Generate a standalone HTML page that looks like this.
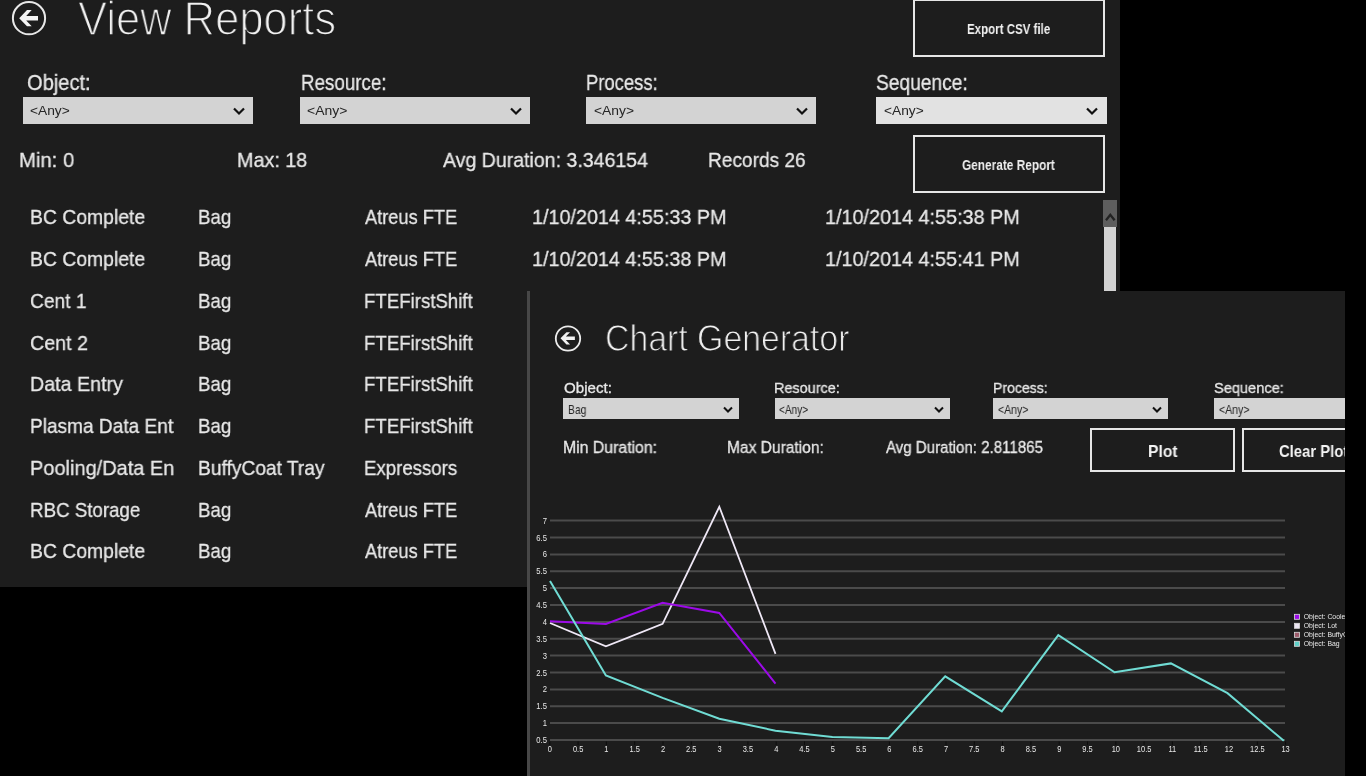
<!DOCTYPE html>
<html><head><meta charset="utf-8">
<style>
html,body{margin:0;padding:0;}
body{width:1366px;height:776px;background:#000;position:relative;overflow:hidden;font-family:"Liberation Sans",sans-serif;}
.abs{position:absolute;}
.t{will-change:transform;position:absolute;white-space:pre;transform-origin:0 0;font-family:"Liberation Sans",sans-serif;}
.t[style*="font-weight:400;color:#e8e8e8"]{-webkit-text-stroke:0.3px #e8e8e8;}
#main{position:absolute;left:0;top:0;width:1120px;height:587px;background:#1d1d1d;overflow:hidden;}
#clip{position:absolute;left:0;top:0;width:1345px;height:776px;overflow:hidden;}
#chart{position:absolute;left:527px;top:291px;width:818px;height:485px;background:#1d1d1d;}
#chartline{position:absolute;left:527px;top:291px;width:3px;height:485px;background:#474747;}
.dd{position:absolute;background:#d3d3d3;}
.btn{position:absolute;box-sizing:border-box;border:2.5px solid #e6e6e6;}
</style></head><body>
<div id="main">
<svg class="abs" style="left:0;top:0" width="60" height="40" viewBox="0 0 60 40">
 <circle cx="29" cy="18.2" r="16.1" fill="none" stroke="#e8e8e8" stroke-width="2"/>
 <path d="M19.2,18.15 L27,10.1 L31.7,10.1 L26.2,15.9 L38,15.9 L38,20.4 L26.2,20.4 L31.7,26.2 L27,26.2 Z" fill="#f4f4f4"/>
</svg>
<div class="dd" style="left:23px;top:97px;width:230px;height:27px"></div>
<div class="dd" style="left:300px;top:97px;width:230px;height:27px"></div>
<div class="dd" style="left:586px;top:97px;width:230px;height:27px"></div>
<div class="dd" style="left:876px;top:97px;width:231px;height:27px;background:#e2e2e2"></div>
<svg class="abs" style="left:0;top:0" width="1120" height="130" viewBox="0 0 1120 130">
 <g fill="none" stroke="#111" stroke-width="2.2">
  <polyline points="234,108.5 239,113.5 244,108.5"/>
  <polyline points="511,108.5 516,113.5 521,108.5"/>
  <polyline points="797,108.5 802,113.5 807,108.5"/>
  <polyline points="1087,108.5 1092,113.5 1097,108.5"/>
 </g>
</svg>
<div class="btn" style="left:913px;top:-1.5px;width:191.5px;height:58.5px"></div>
<div class="btn" style="left:913px;top:135.3px;width:191.5px;height:57.5px"></div>
<div class="abs" style="left:1103px;top:200px;width:14.4px;height:27px;background:#5e5e5e"></div>
<svg class="abs" style="left:1103px;top:200px" width="15" height="27" viewBox="0 0 15 27"><polyline points="3,20.3 7.3,14.8 11.6,20.3" fill="none" stroke="#222" stroke-width="2.3"/></svg>
<div class="abs" style="left:1103.5px;top:227px;width:12.6px;height:70px;background:#d2d2d2"></div>
<div class="t" style="left:78.19px;top:-4.76px;font-size:47.83px;line-height:47.83px;font-weight:400;color:#f2f2f2;transform:scaleX(0.9100);-webkit-text-stroke:1.5px #1d1d1d">View Reports</div>
<div class="t" style="left:27.08px;top:72.47px;font-size:21.74px;line-height:21.74px;font-weight:400;color:#e8e8e8;transform:scaleX(0.9242);">Object:</div>
<div class="t" style="left:300.85px;top:72.47px;font-size:21.74px;line-height:21.74px;font-weight:400;color:#e8e8e8;transform:scaleX(0.8631);">Resource:</div>
<div class="t" style="left:586.20px;top:72.47px;font-size:21.74px;line-height:21.74px;font-weight:400;color:#e8e8e8;transform:scaleX(0.8477);">Process:</div>
<div class="t" style="left:876.12px;top:72.47px;font-size:21.74px;line-height:21.74px;font-weight:400;color:#e8e8e8;transform:scaleX(0.8822);">Sequence:</div>
<div class="t" style="left:29.94px;top:103.92px;font-size:13.04px;line-height:13.04px;font-weight:400;color:#262626;transform:scaleX(1.0556);">&lt;Any&gt;</div>
<div class="t" style="left:307.14px;top:103.92px;font-size:13.04px;line-height:13.04px;font-weight:400;color:#262626;transform:scaleX(1.0714);">&lt;Any&gt;</div>
<div class="t" style="left:593.84px;top:103.92px;font-size:13.04px;line-height:13.04px;font-weight:400;color:#262626;transform:scaleX(1.0611);">&lt;Any&gt;</div>
<div class="t" style="left:883.84px;top:103.92px;font-size:13.04px;line-height:13.04px;font-weight:400;color:#262626;transform:scaleX(1.0525);">&lt;Any&gt;</div>
<div class="t" style="left:18.61px;top:149.62px;font-size:20.87px;line-height:20.87px;font-weight:400;color:#e8e8e8;transform:scaleX(0.9731);">Min: 0</div>
<div class="t" style="left:236.89px;top:149.62px;font-size:20.87px;line-height:20.87px;font-weight:400;color:#e8e8e8;transform:scaleX(0.9466);">Max: 18</div>
<div class="t" style="left:443.00px;top:149.62px;font-size:20.87px;line-height:20.87px;font-weight:400;color:#e8e8e8;transform:scaleX(0.9367);">Avg Duration: 3.346154</div>
<div class="t" style="left:707.96px;top:149.62px;font-size:20.87px;line-height:20.87px;font-weight:400;color:#e8e8e8;transform:scaleX(0.9155);">Records 26</div>
<div class="t" style="left:967.17px;top:23.08px;font-size:13.91px;line-height:13.91px;font-weight:700;color:#f0f0f0;transform:scaleX(0.8283);">Export CSV file</div>
<div class="t" style="left:962.15px;top:158.68px;font-size:13.91px;line-height:13.91px;font-weight:700;color:#f0f0f0;transform:scaleX(0.8519);">Generate Report</div>
<div class="t" style="left:29.94px;top:206.47px;font-size:21.01px;line-height:21.01px;font-weight:400;color:#e8e8e8;transform:scaleX(0.9224);">BC Complete</div>
<div class="t" style="left:197.99px;top:206.47px;font-size:21.01px;line-height:21.01px;font-weight:400;color:#e8e8e8;transform:scaleX(0.8890);">Bag</div>
<div class="t" style="left:365.00px;top:206.47px;font-size:21.01px;line-height:21.01px;font-weight:400;color:#e8e8e8;transform:scaleX(0.8679);">Atreus FTE</div>
<div class="t" style="left:531.91px;top:206.47px;font-size:21.01px;line-height:21.01px;font-weight:400;color:#e8e8e8;transform:scaleX(0.9407);">1/10/2014 4:55:33 PM</div>
<div class="t" style="left:824.91px;top:206.47px;font-size:21.01px;line-height:21.01px;font-weight:400;color:#e8e8e8;transform:scaleX(0.9419);">1/10/2014 4:55:38 PM</div>
<div class="t" style="left:29.94px;top:248.22px;font-size:21.01px;line-height:21.01px;font-weight:400;color:#e8e8e8;transform:scaleX(0.9224);">BC Complete</div>
<div class="t" style="left:197.99px;top:248.22px;font-size:21.01px;line-height:21.01px;font-weight:400;color:#e8e8e8;transform:scaleX(0.8890);">Bag</div>
<div class="t" style="left:365.00px;top:248.22px;font-size:21.01px;line-height:21.01px;font-weight:400;color:#e8e8e8;transform:scaleX(0.8679);">Atreus FTE</div>
<div class="t" style="left:531.91px;top:248.22px;font-size:21.01px;line-height:21.01px;font-weight:400;color:#e8e8e8;transform:scaleX(0.9407);">1/10/2014 4:55:38 PM</div>
<div class="t" style="left:824.91px;top:248.22px;font-size:21.01px;line-height:21.01px;font-weight:400;color:#e8e8e8;transform:scaleX(0.9419);">1/10/2014 4:55:41 PM</div>
<div class="t" style="left:30.09px;top:289.97px;font-size:21.01px;line-height:21.01px;font-weight:400;color:#e8e8e8;transform:scaleX(0.9131);">Cent 1</div>
<div class="t" style="left:197.99px;top:289.97px;font-size:21.01px;line-height:21.01px;font-weight:400;color:#e8e8e8;transform:scaleX(0.8890);">Bag</div>
<div class="t" style="left:364.02px;top:289.97px;font-size:21.01px;line-height:21.01px;font-weight:400;color:#e8e8e8;transform:scaleX(0.8870);">FTEFirstShift</div>
<div class="t" style="left:30.06px;top:331.73px;font-size:21.01px;line-height:21.01px;font-weight:400;color:#e8e8e8;transform:scaleX(0.9371);">Cent 2</div>
<div class="t" style="left:197.99px;top:331.73px;font-size:21.01px;line-height:21.01px;font-weight:400;color:#e8e8e8;transform:scaleX(0.8890);">Bag</div>
<div class="t" style="left:364.02px;top:331.73px;font-size:21.01px;line-height:21.01px;font-weight:400;color:#e8e8e8;transform:scaleX(0.8870);">FTEFirstShift</div>
<div class="t" style="left:29.92px;top:373.48px;font-size:21.01px;line-height:21.01px;font-weight:400;color:#e8e8e8;transform:scaleX(0.9357);">Data Entry</div>
<div class="t" style="left:197.99px;top:373.48px;font-size:21.01px;line-height:21.01px;font-weight:400;color:#e8e8e8;transform:scaleX(0.8890);">Bag</div>
<div class="t" style="left:364.02px;top:373.48px;font-size:21.01px;line-height:21.01px;font-weight:400;color:#e8e8e8;transform:scaleX(0.8870);">FTEFirstShift</div>
<div class="t" style="left:29.98px;top:415.23px;font-size:21.01px;line-height:21.01px;font-weight:400;color:#e8e8e8;transform:scaleX(0.9087);">Plasma Data Ent</div>
<div class="t" style="left:197.99px;top:415.23px;font-size:21.01px;line-height:21.01px;font-weight:400;color:#e8e8e8;transform:scaleX(0.8890);">Bag</div>
<div class="t" style="left:364.02px;top:415.23px;font-size:21.01px;line-height:21.01px;font-weight:400;color:#e8e8e8;transform:scaleX(0.8870);">FTEFirstShift</div>
<div class="t" style="left:29.89px;top:456.98px;font-size:21.01px;line-height:21.01px;font-weight:400;color:#e8e8e8;transform:scaleX(0.9514);">Pooling/Data En</div>
<div class="t" style="left:197.96px;top:456.98px;font-size:21.01px;line-height:21.01px;font-weight:400;color:#e8e8e8;transform:scaleX(0.9141);">BuffyCoat Tray</div>
<div class="t" style="left:364.01px;top:456.98px;font-size:21.01px;line-height:21.01px;font-weight:400;color:#e8e8e8;transform:scaleX(0.8876);">Expressors</div>
<div class="t" style="left:30.01px;top:498.74px;font-size:21.01px;line-height:21.01px;font-weight:400;color:#e8e8e8;transform:scaleX(0.8916);">RBC Storage</div>
<div class="t" style="left:197.99px;top:498.74px;font-size:21.01px;line-height:21.01px;font-weight:400;color:#e8e8e8;transform:scaleX(0.8890);">Bag</div>
<div class="t" style="left:365.00px;top:498.74px;font-size:21.01px;line-height:21.01px;font-weight:400;color:#e8e8e8;transform:scaleX(0.8679);">Atreus FTE</div>
<div class="t" style="left:29.94px;top:540.49px;font-size:21.01px;line-height:21.01px;font-weight:400;color:#e8e8e8;transform:scaleX(0.9224);">BC Complete</div>
<div class="t" style="left:197.99px;top:540.49px;font-size:21.01px;line-height:21.01px;font-weight:400;color:#e8e8e8;transform:scaleX(0.8890);">Bag</div>
<div class="t" style="left:365.00px;top:540.49px;font-size:21.01px;line-height:21.01px;font-weight:400;color:#e8e8e8;transform:scaleX(0.8679);">Atreus FTE</div>
</div>
<div id="clip">
<div id="chart"></div>
<div id="chartline"></div>
<svg class="abs" style="left:540px;top:310px" width="60" height="60" viewBox="540 310 60 60">
 <circle cx="568" cy="338.5" r="12.2" fill="none" stroke="#ececec" stroke-width="1.8"/>
 <path d="M560.50,338.30 L566.47,332.14 L570.07,332.14 L565.86,336.58 L574.88,336.58 L574.88,340.02 L565.86,340.02 L570.07,344.46 L566.47,344.46 Z" fill="#f0f0f0"/>
</svg>
<div class="dd" style="left:563px;top:398px;width:176px;height:21px"></div>
<div class="dd" style="left:775px;top:398px;width:175px;height:21px"></div>
<div class="dd" style="left:993px;top:398px;width:175px;height:21px"></div>
<div class="dd" style="left:1214px;top:398px;width:175px;height:21px"></div>
<svg class="abs" style="left:0;top:380px" width="1366" height="60" viewBox="0 380 1366 60">
 <g fill="none" stroke="#111" stroke-width="2">
  <polyline points="724,407.5 728,411.5 732,407.5"/>
  <polyline points="935,407.5 939,411.5 943,407.5"/>
  <polyline points="1153,407.5 1157,411.5 1161,407.5"/>
 </g>
</svg>
<div class="btn" style="left:1090px;top:428px;width:144.8px;height:43.8px;border-width:2px"></div>
<div class="btn" style="left:1242px;top:428px;width:145.5px;height:44px;border-width:2px"></div>
<svg class="abs" width="1366" height="776" viewBox="0 0 1366 776" style="left:0;top:0;will-change:transform"><line x1="550" x2="1285" y1="740.00" y2="740.00" stroke="#4b4b4b" stroke-width="2"/>
<line x1="550" x2="1285" y1="723.12" y2="723.12" stroke="#4b4b4b" stroke-width="2"/>
<line x1="550" x2="1285" y1="706.25" y2="706.25" stroke="#4b4b4b" stroke-width="2"/>
<line x1="550" x2="1285" y1="689.38" y2="689.38" stroke="#4b4b4b" stroke-width="2"/>
<line x1="550" x2="1285" y1="672.50" y2="672.50" stroke="#4b4b4b" stroke-width="2"/>
<line x1="550" x2="1285" y1="655.62" y2="655.62" stroke="#4b4b4b" stroke-width="2"/>
<line x1="550" x2="1285" y1="638.75" y2="638.75" stroke="#4b4b4b" stroke-width="2"/>
<line x1="550" x2="1285" y1="621.88" y2="621.88" stroke="#4b4b4b" stroke-width="2"/>
<line x1="550" x2="1285" y1="605.00" y2="605.00" stroke="#4b4b4b" stroke-width="2"/>
<line x1="550" x2="1285" y1="588.12" y2="588.12" stroke="#4b4b4b" stroke-width="2"/>
<line x1="550" x2="1285" y1="571.25" y2="571.25" stroke="#4b4b4b" stroke-width="2"/>
<line x1="550" x2="1285" y1="554.38" y2="554.38" stroke="#4b4b4b" stroke-width="2"/>
<line x1="550" x2="1285" y1="537.50" y2="537.50" stroke="#4b4b4b" stroke-width="2"/>
<line x1="550" x2="1285" y1="520.62" y2="520.62" stroke="#4b4b4b" stroke-width="2"/>
<line x1="549.80" x2="549.80" y1="741.5" y2="745" stroke="#0c0c0c" stroke-width="1"/>
<line x1="578.10" x2="578.10" y1="741.5" y2="745" stroke="#0c0c0c" stroke-width="1"/>
<line x1="606.40" x2="606.40" y1="741.5" y2="745" stroke="#0c0c0c" stroke-width="1"/>
<line x1="634.70" x2="634.70" y1="741.5" y2="745" stroke="#0c0c0c" stroke-width="1"/>
<line x1="663.00" x2="663.00" y1="741.5" y2="745" stroke="#0c0c0c" stroke-width="1"/>
<line x1="691.30" x2="691.30" y1="741.5" y2="745" stroke="#0c0c0c" stroke-width="1"/>
<line x1="719.60" x2="719.60" y1="741.5" y2="745" stroke="#0c0c0c" stroke-width="1"/>
<line x1="747.90" x2="747.90" y1="741.5" y2="745" stroke="#0c0c0c" stroke-width="1"/>
<line x1="776.20" x2="776.20" y1="741.5" y2="745" stroke="#0c0c0c" stroke-width="1"/>
<line x1="804.50" x2="804.50" y1="741.5" y2="745" stroke="#0c0c0c" stroke-width="1"/>
<line x1="832.80" x2="832.80" y1="741.5" y2="745" stroke="#0c0c0c" stroke-width="1"/>
<line x1="861.10" x2="861.10" y1="741.5" y2="745" stroke="#0c0c0c" stroke-width="1"/>
<line x1="889.40" x2="889.40" y1="741.5" y2="745" stroke="#0c0c0c" stroke-width="1"/>
<line x1="917.70" x2="917.70" y1="741.5" y2="745" stroke="#0c0c0c" stroke-width="1"/>
<line x1="946.00" x2="946.00" y1="741.5" y2="745" stroke="#0c0c0c" stroke-width="1"/>
<line x1="974.30" x2="974.30" y1="741.5" y2="745" stroke="#0c0c0c" stroke-width="1"/>
<line x1="1002.60" x2="1002.60" y1="741.5" y2="745" stroke="#0c0c0c" stroke-width="1"/>
<line x1="1030.90" x2="1030.90" y1="741.5" y2="745" stroke="#0c0c0c" stroke-width="1"/>
<line x1="1059.20" x2="1059.20" y1="741.5" y2="745" stroke="#0c0c0c" stroke-width="1"/>
<line x1="1087.50" x2="1087.50" y1="741.5" y2="745" stroke="#0c0c0c" stroke-width="1"/>
<line x1="1115.80" x2="1115.80" y1="741.5" y2="745" stroke="#0c0c0c" stroke-width="1"/>
<line x1="1144.10" x2="1144.10" y1="741.5" y2="745" stroke="#0c0c0c" stroke-width="1"/>
<line x1="1172.40" x2="1172.40" y1="741.5" y2="745" stroke="#0c0c0c" stroke-width="1"/>
<line x1="1200.70" x2="1200.70" y1="741.5" y2="745" stroke="#0c0c0c" stroke-width="1"/>
<line x1="1229.00" x2="1229.00" y1="741.5" y2="745" stroke="#0c0c0c" stroke-width="1"/>
<line x1="1257.30" x2="1257.30" y1="741.5" y2="745" stroke="#0c0c0c" stroke-width="1"/>
<line x1="1285.60" x2="1285.60" y1="741.5" y2="745" stroke="#0c0c0c" stroke-width="1"/>
<polyline fill="none" stroke="#efe8f6" stroke-width="1.8" stroke-linejoin="miter" points="550.0,623.0 605.9,646.4 662.6,623.9 719.3,506.8 775.5,653.9"/>
<polyline fill="none" stroke="#9c0ae8" stroke-width="2" stroke-linejoin="miter" points="550.0,621.2 605.9,623.9 662.6,602.8 719.3,612.9 775.5,683.6"/>
<polyline fill="none" stroke="#70dcd4" stroke-width="2" stroke-linejoin="miter" points="550.0,581.0 605.9,675.4 662.6,697.9 719.3,718.7 775.5,730.7 832.4,737.0 888.6,738.2 945.2,676.3 1001.8,711.3 1058.3,635.1 1114.6,672.3 1170.9,663.4 1227.5,693.2 1283.8,740.8"/><g font-family="Liberation Sans" font-size="8.5" fill="#e8e8e8"><text transform="translate(547,743.00) scale(0.9,1)" text-anchor="end">0.5</text>
<text transform="translate(547,726.12) scale(0.9,1)" text-anchor="end">1</text>
<text transform="translate(547,709.25) scale(0.9,1)" text-anchor="end">1.5</text>
<text transform="translate(547,692.38) scale(0.9,1)" text-anchor="end">2</text>
<text transform="translate(547,675.50) scale(0.9,1)" text-anchor="end">2.5</text>
<text transform="translate(547,658.62) scale(0.9,1)" text-anchor="end">3</text>
<text transform="translate(547,641.75) scale(0.9,1)" text-anchor="end">3.5</text>
<text transform="translate(547,624.88) scale(0.9,1)" text-anchor="end">4</text>
<text transform="translate(547,608.00) scale(0.9,1)" text-anchor="end">4.5</text>
<text transform="translate(547,591.12) scale(0.9,1)" text-anchor="end">5</text>
<text transform="translate(547,574.25) scale(0.9,1)" text-anchor="end">5.5</text>
<text transform="translate(547,557.38) scale(0.9,1)" text-anchor="end">6</text>
<text transform="translate(547,540.50) scale(0.9,1)" text-anchor="end">6.5</text>
<text transform="translate(547,523.62) scale(0.9,1)" text-anchor="end">7</text>
<text transform="translate(549.80,751.5) scale(0.88,1)" text-anchor="middle">0</text>
<text transform="translate(578.10,751.5) scale(0.88,1)" text-anchor="middle">0.5</text>
<text transform="translate(606.40,751.5) scale(0.88,1)" text-anchor="middle">1</text>
<text transform="translate(634.70,751.5) scale(0.88,1)" text-anchor="middle">1.5</text>
<text transform="translate(663.00,751.5) scale(0.88,1)" text-anchor="middle">2</text>
<text transform="translate(691.30,751.5) scale(0.88,1)" text-anchor="middle">2.5</text>
<text transform="translate(719.60,751.5) scale(0.88,1)" text-anchor="middle">3</text>
<text transform="translate(747.90,751.5) scale(0.88,1)" text-anchor="middle">3.5</text>
<text transform="translate(776.20,751.5) scale(0.88,1)" text-anchor="middle">4</text>
<text transform="translate(804.50,751.5) scale(0.88,1)" text-anchor="middle">4.5</text>
<text transform="translate(832.80,751.5) scale(0.88,1)" text-anchor="middle">5</text>
<text transform="translate(861.10,751.5) scale(0.88,1)" text-anchor="middle">5.5</text>
<text transform="translate(889.40,751.5) scale(0.88,1)" text-anchor="middle">6</text>
<text transform="translate(917.70,751.5) scale(0.88,1)" text-anchor="middle">6.5</text>
<text transform="translate(946.00,751.5) scale(0.88,1)" text-anchor="middle">7</text>
<text transform="translate(974.30,751.5) scale(0.88,1)" text-anchor="middle">7.5</text>
<text transform="translate(1002.60,751.5) scale(0.88,1)" text-anchor="middle">8</text>
<text transform="translate(1030.90,751.5) scale(0.88,1)" text-anchor="middle">8.5</text>
<text transform="translate(1059.20,751.5) scale(0.88,1)" text-anchor="middle">9</text>
<text transform="translate(1087.50,751.5) scale(0.88,1)" text-anchor="middle">9.5</text>
<text transform="translate(1115.80,751.5) scale(0.88,1)" text-anchor="middle">10</text>
<text transform="translate(1144.10,751.5) scale(0.88,1)" text-anchor="middle">10.5</text>
<text transform="translate(1172.40,751.5) scale(0.88,1)" text-anchor="middle">11</text>
<text transform="translate(1200.70,751.5) scale(0.88,1)" text-anchor="middle">11.5</text>
<text transform="translate(1229.00,751.5) scale(0.88,1)" text-anchor="middle">12</text>
<text transform="translate(1257.30,751.5) scale(0.88,1)" text-anchor="middle">12.5</text>
<text transform="translate(1285.60,751.5) scale(0.88,1)" text-anchor="middle">13</text></g><rect x="1294.5" y="614.3" width="5" height="5" fill="#9c0ae8" stroke="#dcdcdc" stroke-width="0.8"/><text transform="translate(1303.7,618.9) scale(0.86,1)" font-family="Liberation Sans" font-size="8" fill="#e8e8e8">Object: Cooler</text><rect x="1294.5" y="623.3" width="5" height="5" fill="#ece6f4" stroke="#dcdcdc" stroke-width="0.8"/><text transform="translate(1303.7,627.9) scale(0.86,1)" font-family="Liberation Sans" font-size="8" fill="#e8e8e8">Object: Lot</text><rect x="1294.5" y="632.3" width="5" height="5" fill="#9c5a6a" stroke="#dcdcdc" stroke-width="0.8"/><text transform="translate(1303.7,636.9) scale(0.86,1)" font-family="Liberation Sans" font-size="8" fill="#e8e8e8">Object: BuffyCoat Tray</text><rect x="1294.5" y="641.3" width="5" height="5" fill="#5fd0c8" stroke="#dcdcdc" stroke-width="0.8"/><text transform="translate(1303.7,645.9) scale(0.86,1)" font-family="Liberation Sans" font-size="8" fill="#e8e8e8">Object: Bag</text></svg>
<div class="t" style="left:605.21px;top:319.87px;font-size:37.68px;line-height:37.68px;font-weight:400;color:#f2f2f2;transform:scaleX(0.8977);-webkit-text-stroke:1.1px #1d1d1d">Chart Generator</div>
<div class="t" style="left:563.88px;top:381.01px;font-size:14.93px;line-height:14.93px;font-weight:400;color:#e8e8e8;transform:scaleX(1.0123);">Object:</div>
<div class="t" style="left:774.13px;top:381.01px;font-size:14.93px;line-height:14.93px;font-weight:400;color:#e8e8e8;transform:scaleX(0.9683);">Resource:</div>
<div class="t" style="left:992.50px;top:381.01px;font-size:14.93px;line-height:14.93px;font-weight:400;color:#e8e8e8;transform:scaleX(0.9404);">Process:</div>
<div class="t" style="left:1213.68px;top:381.01px;font-size:14.93px;line-height:14.93px;font-weight:400;color:#e8e8e8;transform:scaleX(0.9775);">Sequence:</div>
<div class="t" style="left:567.57px;top:404.77px;font-size:11.88px;line-height:11.88px;font-weight:400;color:#262626;transform:scaleX(0.8702);">Bag</div>
<div class="t" style="left:779.30px;top:404.77px;font-size:11.88px;line-height:11.88px;font-weight:400;color:#262626;transform:scaleX(0.8459);">&lt;Any&gt;</div>
<div class="t" style="left:997.84px;top:404.77px;font-size:11.88px;line-height:11.88px;font-weight:400;color:#262626;transform:scaleX(0.8843);">&lt;Any&gt;</div>
<div class="t" style="left:1219.05px;top:404.77px;font-size:11.88px;line-height:11.88px;font-weight:400;color:#262626;transform:scaleX(0.8877);">&lt;Any&gt;</div>
<div class="t" style="left:563.13px;top:439.85px;font-size:15.94px;line-height:15.94px;font-weight:400;color:#e8e8e8;transform:scaleX(0.9927);">Min Duration:</div>
<div class="t" style="left:726.58px;top:439.85px;font-size:15.94px;line-height:15.94px;font-weight:400;color:#e8e8e8;transform:scaleX(0.9759);">Max Duration:</div>
<div class="t" style="left:886.10px;top:439.85px;font-size:15.94px;line-height:15.94px;font-weight:400;color:#e8e8e8;transform:scaleX(0.9452);">Avg Duration: 2.811865</div>
<div class="t" style="left:1147.80px;top:443.06px;font-size:16.09px;line-height:16.09px;font-weight:700;color:#f4f4f4;transform:scaleX(0.9735);">Plot</div>
<div class="t" style="left:1279.08px;top:443.06px;font-size:16.09px;line-height:16.09px;font-weight:700;color:#f4f4f4;transform:scaleX(0.9216);">Clear Plot</div>
</div>
</body></html>
